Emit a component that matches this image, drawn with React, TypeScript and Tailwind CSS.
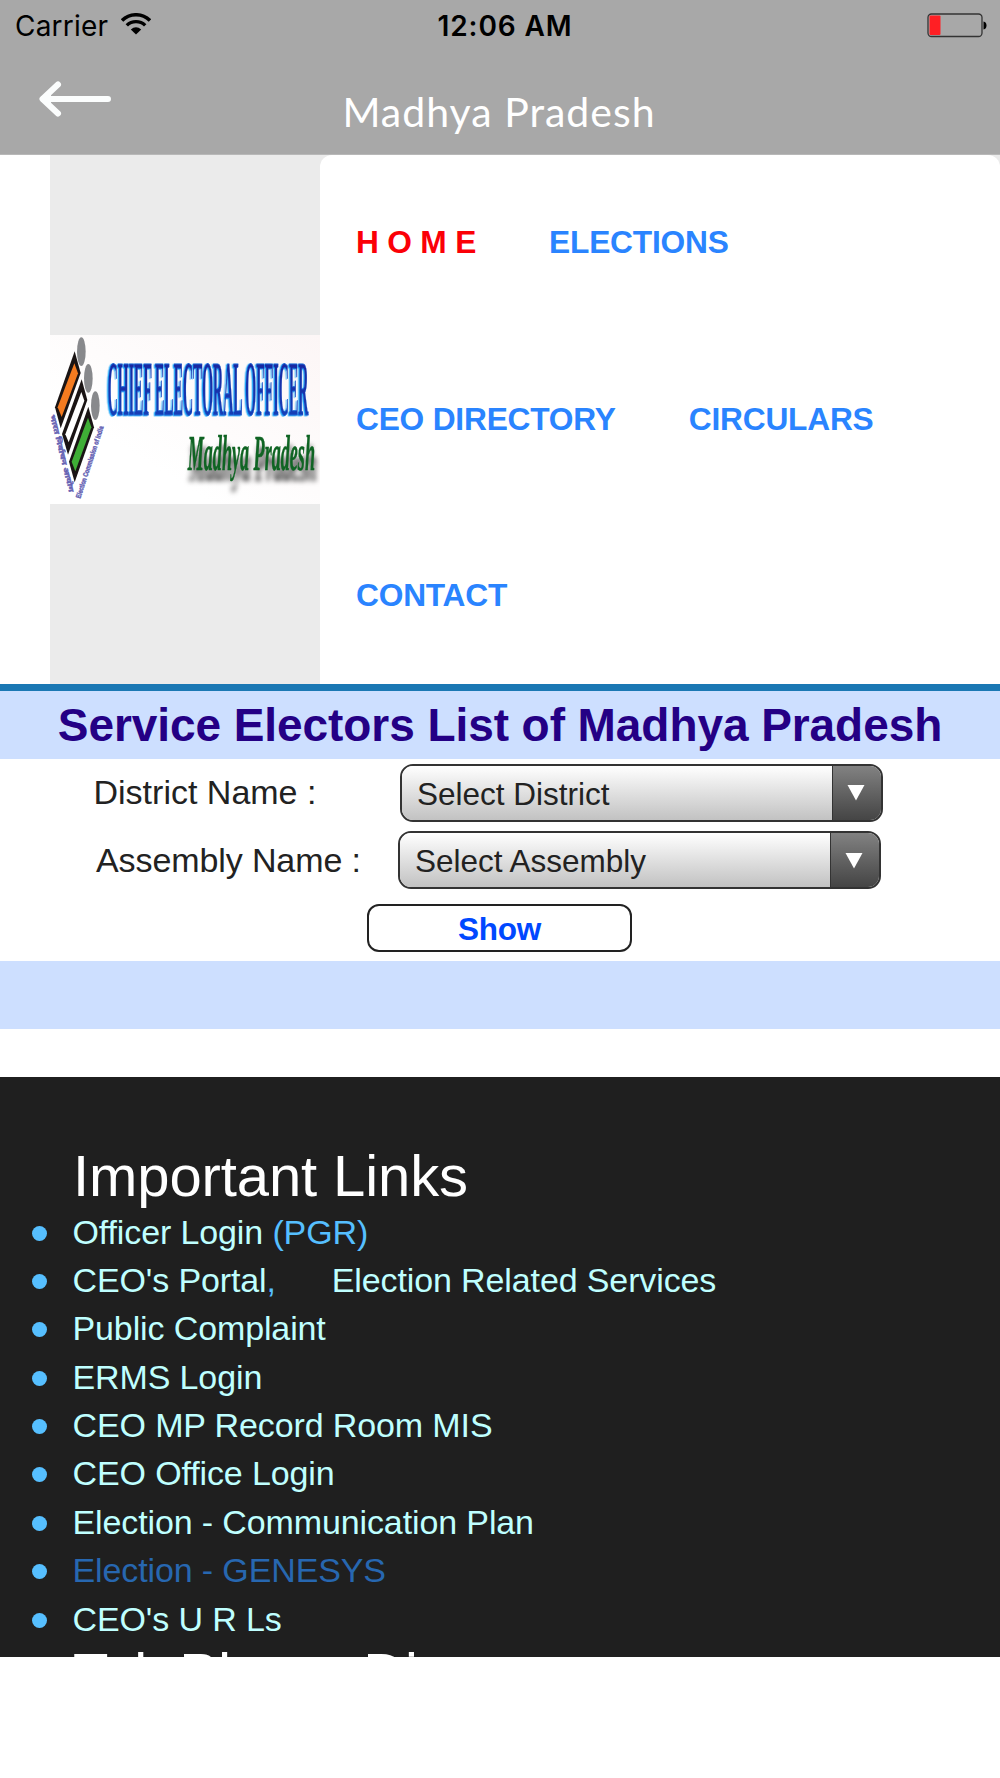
const navRows = [
    [{ label: "H O M E", active: true }, { label: "ELECTIONS" }],
    [{ label: "CEO DIRECTORY" }, { label: "CIRCULARS" }],
    [{ label: "CONTACT" }],
]

const links = [
    "Public Complaint",
    "ERMS Login",
    "CEO MP Record Room MIS",
    "CEO Office Login",
    "Election - Communication Plan",
    "Election - GENESYS",
    "CEO's U R Ls",
]

function StatusBar() {
    return (
        <div className="grid grid-cols-3 items-center h-[51px] pl-[15px] pr-[13px] text-black font-[Inter]">
            <div className="flex items-center gap-[13px]">
                <span className="text-[28px] tracking-[0.2px]">Carrier</span>
                <svg className="mt-[-3px]" width="30" height="22" viewBox="0 0 30 22">
                    <path d="M1 7.5 A20 20 0 0 1 29 7.5" fill="none" stroke="#000" strokeWidth="3.6" />
                    <path d="M5.8 12.4 A13.2 13.2 0 0 1 24.2 12.4" fill="none" stroke="#000" strokeWidth="3.4" />
                    <path d="M9.8 16.4 Q15 12.2 20.2 16.4 L15 21.6 Z" />
                </svg>
            </div>
            <span className="text-center text-[28px] font-semibold tracking-[0.9px] pl-2">12:06 AM</span>
            <svg className="justify-self-end mt-[-1px]" width="60" height="25" viewBox="0 0 60 25">
                <rect x="1" y="1" width="54" height="22.5" rx="3.5" fill="none" stroke="#333" strokeWidth="1.3" />
                <rect x="2.5" y="2.6" width="11" height="19.5" rx="1" fill="#ff1f24" />
                <path d="M56.5 8.5 Q59.5 9 59.5 12.5 Q59.5 16 56.5 16.5 Z" />
            </svg>
        </div>
    )
}

function Header() {
    return (
        <header className="h-[155px] bg-[#a8a8a8] border-b border-[#b8b8b8]">
            <StatusBar />
            <div className="grid grid-cols-[200px_600px_200px] h-[103px]">
                <svg className="ml-[38px] mt-[29px]" width="76" height="38" viewBox="0 0 76 38">
                    <path d="M20 4.5 L4.5 19 L20 33.5 M5 19 H70" fill="none" stroke="#fbfdfd" strokeWidth="6" strokeLinecap="round" strokeLinejoin="round" />
                    <path d="M4.5 19 L13 11 V27 Z" fill="#fbfdfd" />
                </svg>
                <h1 className="pr-[2px] text-center text-[41px] leading-[122px] tracking-[1px] text-white font-[Lato]">Madhya Pradesh</h1>
            </div>
        </header>
    )
}

function Logo() {
    return (
        <svg className="block" width="270" height="169" viewBox="30 45 810 507" preserveAspectRatio="none">
            <defs>
                <linearGradient id="paper" x1="0" x2="1" y1="1" y2="0">
                    <stop offset="0.3" stopColor="#fff" />
                    <stop offset="1" stopColor="#fcf6f6" />
                </linearGradient>
                <linearGradient id="letters" x1="0" x2="0" y1="0" y2="1">
                    <stop offset="0" stopColor="#1a1f98" />
                    <stop offset="1" stopColor="#1646bd" />
                </linearGradient>
            </defs>
            <rect x="30" y="45" width="810" height="507" fill="url(#paper)" />
            <g fill="#88898c">
                <ellipse cx="124" cy="95" rx="13" ry="43" />
                <ellipse cx="145" cy="175" rx="13" ry="43" />
                <ellipse cx="166" cy="257" rx="13" ry="43" />
            </g>
            <path d="M104 94 L122 159 L62 325 L45 262 Z" fill="#1a1414" />
            <path d="M103 130 L114 160 L65 291 L53 262 Z" fill="#f47b20" />
            <path d="M125 178 L142 240 L84 404 L66 342 Z" fill="#1a1414" />
            <path d="M124 216 L133 242 L86 367 L76 343 Z" fill="#fff" />
            <path d="M145 260 L162 322 L104 487 L87 425 Z" fill="#1a1414" />
            <path d="M144 293 L154 322 L106 454 L95 425 Z" fill="#3fae36" />
            <g fill="#6663b4" stroke="#6663b4" strokeWidth="1.4" fontFamily="Liberation Sans, Noto Sans, sans-serif" fontWeight="bold" fontSize="21">
                <text transform="translate(30 286) rotate(76)" textLength="238" lengthAdjust="spacingAndGlyphs">भारत निर्वाचन आयोग</text>
                <text transform="translate(121 536) rotate(-72)" textLength="226" lengthAdjust="spacingAndGlyphs">Election Commission of India</text>
            </g>
            {/* light blue bevel on the lower left of the letters */}
            <g
                className="[filter:drop-shadow(-4px_2px_0_#22a7f7)]"
                fontFamily="Liberation Serif"
                fontWeight="bold"
                fill="url(#letters)"
                stroke="#1a63d6"
                strokeWidth="1"
            >
                <text transform="translate(203 286) scale(1 2.6)" fontSize="90" textLength="602" lengthAdjust="spacingAndGlyphs">CHIEF ELECTORAL OFFICER</text>
            </g>
            <g
                className="[filter:drop-shadow(5px_32px_8px_#000b)]"
                fontFamily="Liberation Serif"
                fontWeight="bold"
                fontStyle="italic"
                fill="#0f6423"
                stroke="#0f6423"
                strokeWidth="1"
            >
                <text transform="translate(443 449) scale(1 1.75)" fontSize="86" textLength="382" lengthAdjust="spacingAndGlyphs">Madhya Pradesh</text>
            </g>
        </svg>
    )
}

function Select({ text }: { text: string }) {
    return (
        <div className="flex h-[58px] w-[483px] overflow-hidden rounded-[13px] border-2 border-[#333]">
            <span className="grow bg-linear-to-b from-white to-[#c2c2c2] pl-[15px] text-[31.5px] leading-[56px]">{text}</span>
            <span className="flex w-[49px] items-center justify-center border-l border-[#333] bg-linear-to-b from-[#828282] to-[#454545] pr-[3px]">
                <svg width="18" height="17" viewBox="0 0 18 17">
                    <path d="M0.5 1 H17.5 L9 16.5 Z" fill="#fff" />
                </svg>
            </span>
        </div>
    )
}

function LinkItem({ children }: { children: React.ReactNode }) {
    return (
        <li className="flex h-[48.37px] items-center whitespace-pre text-[34px] tracking-[-0.12px]">
            <span className="ml-[32px] mr-[25.5px] mt-[2px] size-[15px] rounded-full bg-[#56bfff]" />
            <span>{children}</span>
        </li>
    )
}

export default function App() {
    return (
        <div className="h-[1778px] w-[1000px] overflow-hidden bg-white font-['Liberation_Sans',sans-serif] text-[#222]">
            <Header />
            <div className="flex h-[529px]">
                <div className="ml-[50px] flex w-[270px] items-center bg-[#ebebeb]">
                    <Logo />
                </div>
                <div className="grow bg-[#ebebeb]">
                    <nav className="h-full rounded-t-[12px] bg-white pl-[36px] text-[31.7px] font-bold tracking-[-0.2px] text-[#2a84ff]">
                        {navRows.map((row, i) => (
                            <div key={i} className="flex h-[176.2px] items-center gap-[73px]">
                                {row.map((item) => (
                                    <a key={item.label} className={item.active ? "text-[#fb0007]" : ""}>{item.label}</a>
                                ))}
                            </div>
                        ))}
                    </nav>
                </div>
            </div>

            <h2 className="h-[75px] border-t-7 border-[#1a78b4] bg-[#cddfff] text-center text-[46px] leading-[68px] font-bold tracking-[-0.07px] text-[#240085]">
                Service Electors List of Madhya Pradesh
            </h2>
            <div className="h-[202px]">
                <div className="flex h-[67px] items-center">
                    <span className="w-[306.5px] ml-[93.5px] text-[34px]">District Name :</span>
                    <Select text="Select District" />
                </div>
                <div className="flex h-[68px] items-center">
                    <span className="w-[302px] ml-[96px] text-[34px] tracking-[-0.1px]">Assembly Name :</span>
                    <Select text="Select Assembly" />
                </div>
                <div className="flex h-[67px] items-center justify-center">
                    <button className="mr-[1px] h-[48px] w-[265px] rounded-[12px] border-2 border-[#222] pt-[1px] text-[31.5px] leading-[44px] font-bold tracking-[-0.3px] text-[#0048ff]">Show</button>
                </div>
            </div>
            <div className="h-[68px] bg-[#cddfff]" />

            <footer className="mt-[48px] h-[580px] overflow-hidden bg-[#1f1f1f] pt-[67px] text-[#bfffff]">
                <h3 className="pl-[73px] text-[58px] leading-[64px] tracking-[-0.1px] text-white">Important Links</h3>
                <ul>
                    <LinkItem>Officer Login <span className="text-[#56bfff]">(PGR)</span></LinkItem>
                    <LinkItem>CEO's Portal<span className="text-[#56bfff]">,</span>      Election Related Services</LinkItem>
                    {links.map((link) => (
                        <LinkItem key={link}>
                            <span className={link.includes("GENESYS") ? "text-[#2767b0]" : ""}>{link}</span>
                        </LinkItem>
                    ))}
                </ul>
                <h3 className="pl-[73px] text-[58px] leading-[62px] text-white">Tel. Phone Directory</h3>
            </footer>
        </div>
    )
}
